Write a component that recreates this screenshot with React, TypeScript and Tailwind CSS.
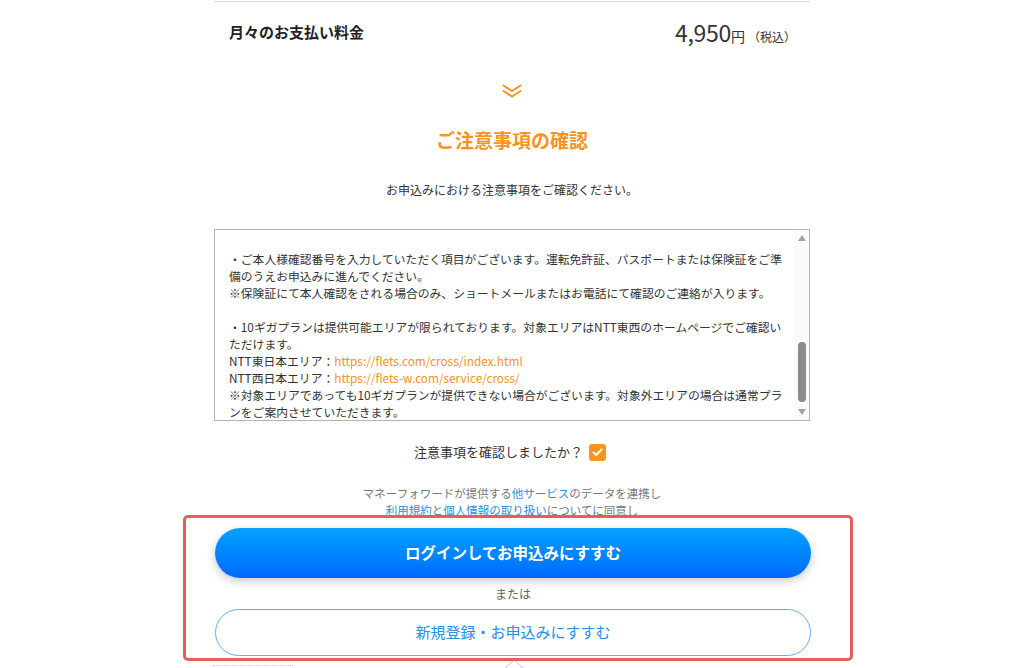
import React from "react";

const jp = { fontFamily: '"Noto Sans CJK JP", "Noto Sans", sans-serif' };

export default function App() {
  return (
    <div className="relative w-[1024px] h-[668px] overflow-hidden bg-white text-[#333]" style={jp}>
      <div className="mx-auto w-[596px] flex flex-col">
        <div className="h-px mt-px bg-[#dcdcdc]" />
        {/* price row */}
        <div className="h-[60px] flex items-center justify-between pl-[15px] pr-[14px]">
          <span className="text-[15px] font-bold text-[#222]">月々のお支払い料金</span>
          <span className="flex items-baseline text-[#333]">
            <span className="text-[23px] leading-none tracking-[-0.3px]">4,950</span>
            <span className="text-[14px] leading-none">円</span>
            <span className="text-[12px] leading-none ml-[3px]">（税込）</span>
          </span>
        </div>
        {/* chevron */}
        <div className="h-[56px] flex items-center justify-center pt-[1px]">
          <svg width="22" height="16" viewBox="0 0 22 16" fill="none">
            <path d="M2.5 2.5 L11 8 L19.5 2.5" stroke="#f7931e" strokeWidth="2" strokeLinecap="round" strokeLinejoin="round" />
            <path d="M2.5 8 L11 13.5 L19.5 8" stroke="#f7931e" strokeWidth="2" strokeLinecap="round" strokeLinejoin="round" />
          </svg>
        </div>
        <div className="h-[44px] flex items-center justify-center">
          <span className="text-[19px] font-bold text-[#f7931e]">ご注意事項の確認</span>
        </div>
        <div className="h-[56px] flex items-center justify-center">
          <span className="text-[12px] text-[#333]">お申込みにおける注意事項をご確認ください。</span>
        </div>
        {/* notes box */}
        <div className="mt-[11px] h-[192px] border border-[#b4b4b4] flex overflow-hidden">
          <div className="flex-1 pl-[14px] pt-[20px] text-[11.8px] leading-[17px] text-[#333] whitespace-nowrap">
            <div>・ご本人様確認番号を入力していただく項目がございます。運転免許証、パスポートまたは保険証をご準</div>
            <div>備のうえお申込みに進んでください。</div>
            <div>※保険証にて本人確認をされる場合のみ、ショートメールまたはお電話にて確認のご連絡が入ります。</div>
            <div>&nbsp;</div>
            <div>・10ギガプランは提供可能エリアが限られております。対象エリアはNTT東西のホームページでご確認い</div>
            <div>ただけます。</div>
            <div>
              NTT東日本エリア：<span className="text-[#f7931e]">https://flets.com/cross/index.html</span>
            </div>
            <div>
              NTT西日本エリア：<span className="text-[#f7931e]">https://flets-w.com/service/cross/</span>
            </div>
            <div>※対象エリアであっても10ギガプランが提供できない場合がございます。対象外エリアの場合は通常プラ</div>
            <div>ンをご案内させていただきます。</div>
          </div>
          {/* scrollbar */}
          <div className="w-[15px] bg-[#fafafa] flex flex-col items-center">
            <div className="h-[16px] flex items-center justify-center">
              <svg width="8" height="6" viewBox="0 0 8 6"><path d="M0 6 L4 0 L8 6 Z" fill="#a3a3a3" /></svg>
            </div>
            <div className="mt-[96px] w-[8px] h-[60px] rounded-full bg-[#8c8c8c]" />
            <div className="mt-[3px] h-[14px] flex items-center justify-center">
              <svg width="8" height="6" viewBox="0 0 8 6"><path d="M0 0 L8 0 L4 6 Z" fill="#a3a3a3" /></svg>
            </div>
          </div>
        </div>
        {/* checkbox */}
        <div className="h-[62px] flex items-center justify-center gap-[6px] pr-[4px]">
          <span className="text-[13px] text-[#333]">注意事項を確認しましたか？</span>
          <span className="w-[17px] h-[17px] rounded-[3px] bg-[#f7931e] flex items-center justify-center">
            <svg width="11" height="9" viewBox="0 0 11 9" fill="none">
              <path d="M1.5 4.5 L4.2 7 L9.5 1.5" stroke="white" strokeWidth="2" strokeLinecap="round" strokeLinejoin="round" />
            </svg>
          </span>
        </div>
        <div className="mt-[2px] flex flex-col items-center text-[11.5px] leading-[17px] text-[#777]">
          <div>
            マネーフォワードが提供する<span className="text-[#2b90d9]">他サービス</span>のデータを連携し
          </div>
          <div>
            <span className="text-[#2b90d9]">利用規約</span>と<span className="text-[#2b90d9]">個人情報の取り扱い</span>についてに同意し
          </div>
        </div>
      </div>

      {/* background peeking items */}
      <div className="absolute left-[213px] top-[665px] w-[80px] border-t border-dotted border-[#c8c8c8]" />
      <div className="absolute left-[503px] top-[658px]">
        <svg width="22" height="12" viewBox="0 0 22 12" fill="none">
          <path d="M1 11 L11 2 L21 11" stroke="#c4c4c4" strokeWidth="1" fill="white" />
        </svg>
      </div>

      {/* highlighted footer overlay */}
      <div className="absolute left-[183px] top-[515px] w-[670px] h-[146px] border-[3px] border-[#ec5b5b] rounded-[5px] bg-white flex flex-col items-start pl-[29px] pt-[10px]">
        <div className="w-[596px] h-[50px] rounded-full bg-gradient-to-b from-[#0aa2ff] to-[#0068ff] shadow-[0_3px_10px_rgba(0,0,0,0.22)] flex items-center justify-center">
          <span className="text-white text-[15.5px] font-bold">ログインしてお申込みにすすむ</span>
        </div>
        <div className="w-[596px] h-[31px] flex items-center justify-center text-[12px] text-[#666]">または</div>
        <div className="w-[596px] h-[47px] rounded-full border border-[#5fb0f5] bg-white flex items-center justify-center">
          <span className="text-[15px] text-[#2a8fe6]">新規登録・お申込みにすすむ</span>
        </div>
      </div>
    </div>
  );
}
